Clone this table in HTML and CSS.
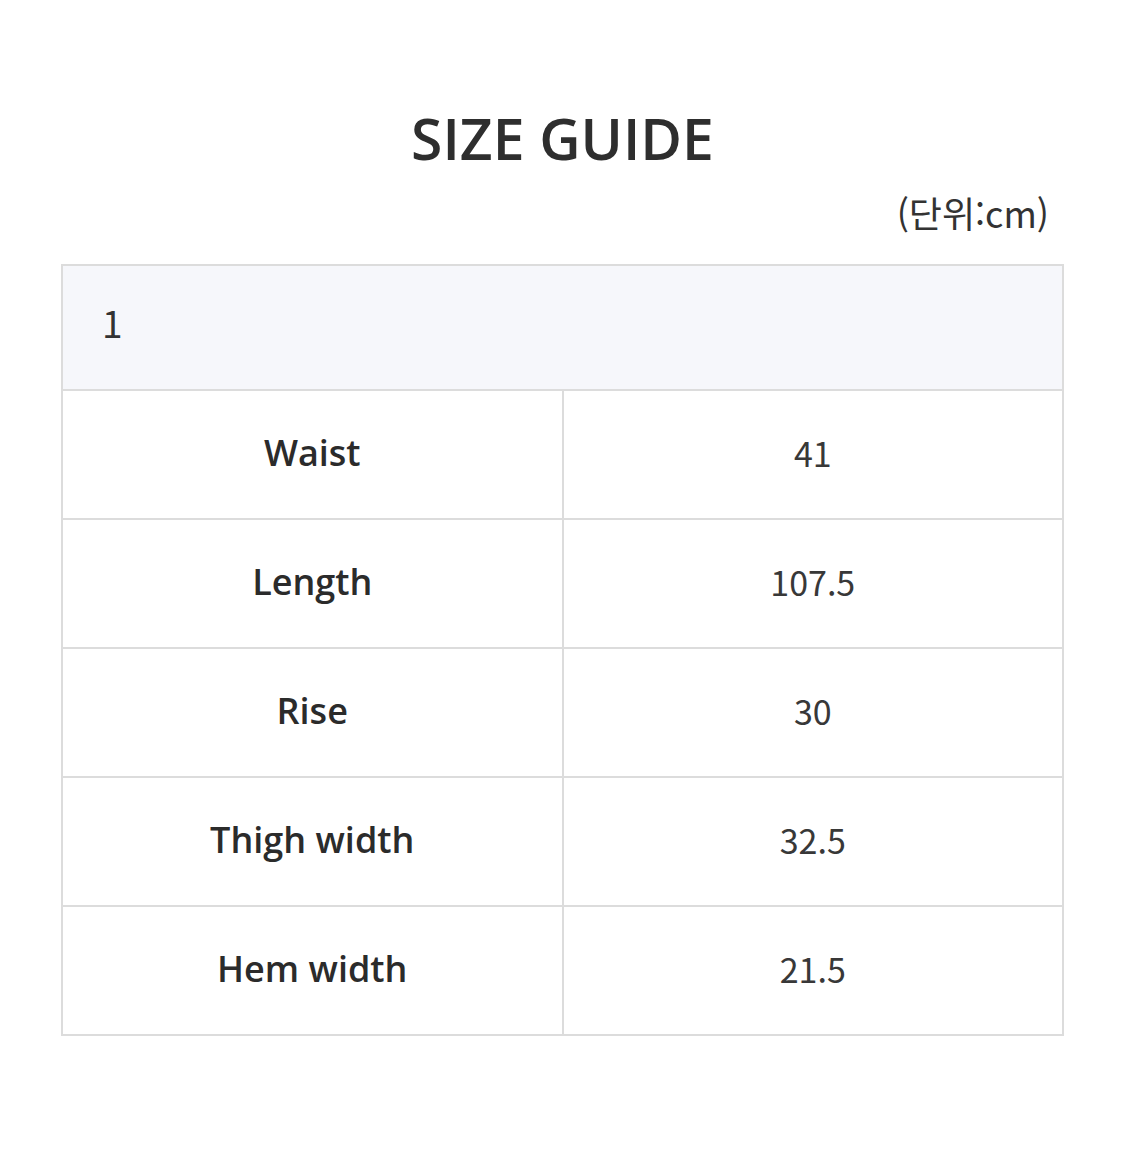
FILE: index.html
```html
<!DOCTYPE html>
<html lang="ko">
<head>
<meta charset="utf-8">
<link rel="stylesheet" href="styles.css">
</head>
<body>
<div class="page">
  <h1 class="title">SIZE GUIDE</h1>
  <div class="unit">(단위:cm)</div>
  <table class="size-table">
    <thead>
      <tr><th colspan="2" class="size-head">1</th></tr>
    </thead>
    <tbody>
      <tr><td class="label">Waist</td><td class="value">41</td></tr>
      <tr><td class="label">Length</td><td class="value">107.5</td></tr>
      <tr><td class="label">Rise</td><td class="value">30</td></tr>
      <tr><td class="label">Thigh width</td><td class="value">32.5</td></tr>
      <tr><td class="label">Hem width</td><td class="value">21.5</td></tr>
    </tbody>
  </table>
</div>
</body>
</html>
```

FILE: styles.css
```css
html, body {
  margin: 0;
  padding: 0;
  background: #fff;
}
.page {
  width: 1125px;
  min-height: 1167px;
  padding: 100px 61px 0 61px;
  box-sizing: border-box;
  font-family: "Open Sans", "Noto Sans CJK KR", sans-serif;
  color: #2b2b2b;
}
.title {
  margin: 0;
  text-align: center;
  font-size: 57px;
  font-weight: 600;
  line-height: 76px;
  color: #2e2e2e;
}
.unit {
  text-align: right;
  font-family: "Noto Sans CJK KR", sans-serif;
  font-size: 36px;
  line-height: 44px;
  margin-top: 14px;
  padding-right: 15px;
  color: #333;
}
.size-table {
  margin-top: 30px;
  width: 1003px;
  border-collapse: collapse;
  table-layout: fixed;
  border: 2px solid #dcdcdc;
}
.size-table th,
.size-table td {
  border: 2px solid #dcdcdc;
}
.size-head {
  height: 111px;
  background: #f6f7fb;
  text-align: left;
  padding: 0 0 12px 39px;
  font-family: "Noto Sans CJK KR", sans-serif;
  font-weight: 400;
  font-size: 37px;
  color: #333;
}
.label,
.value {
  height: 123px;
  text-align: center;
  padding: 0 0 4px 0;
  font-size: 36px;
}
.label {
  font-weight: 600;
  color: #2b2b2b;
}
.value {
  font-family: "Noto Sans CJK KR", sans-serif;
  font-weight: 400;
  font-size: 34px;
  color: #383838;
}
```
